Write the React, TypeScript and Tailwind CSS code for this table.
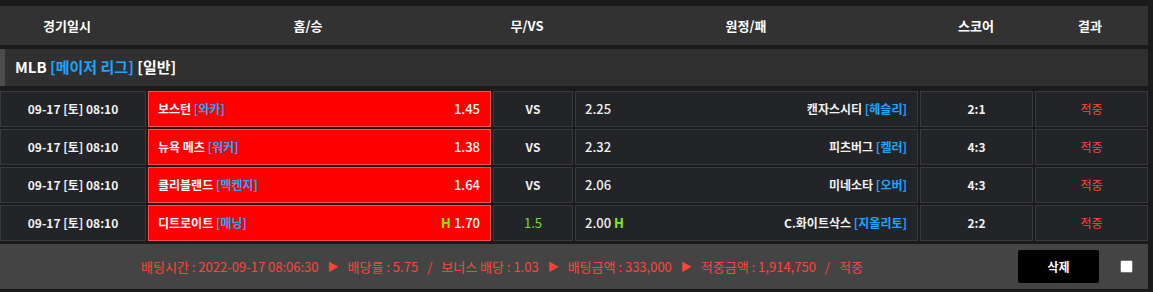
const font = { fontFamily: '"Noto Sans CJK KR", "Noto Sans", sans-serif' };

type Game = {
  home: string;
  homeP: string;
  homeOdd: string;
  draw: string;
  awayOdd: string;
  away: string;
  awayP: string;
  score: string;
  handicap?: boolean;
};

const games: Game[] = [
  { home: "보스턴", homeP: "[와카]", homeOdd: "1.45", draw: "VS", awayOdd: "2.25", away: "캔자스시티", awayP: "[헤슬리]", score: "2:1" },
  { home: "뉴욕 메츠", homeP: "[워커]", homeOdd: "1.38", draw: "VS", awayOdd: "2.32", away: "피츠버그", awayP: "[켈러]", score: "4:3" },
  { home: "클리블랜드", homeP: "[맥켄지]", homeOdd: "1.64", draw: "VS", awayOdd: "2.06", away: "미네소타", awayP: "[오버]", score: "4:3" },
  { home: "디트로이트", homeP: "[매닝]", homeOdd: "1.70", draw: "1.5", awayOdd: "2.00", away: "C.화이트삭스", awayP: "[지올리토]", score: "2:2", handicap: true },
];

function Cell({ className, children }: { className: string; children: React.ReactNode }) {
  return (
    <div className={`flex h-[36px] items-center border border-[#38393c] bg-[#232427] ${className}`}>
      {children}
    </div>
  );
}

function Row({ g }: { g: Game }) {
  return (
    <div className="flex gap-[2px]">
      <Cell className="w-[146px] justify-center text-[12px] font-bold text-[#f2f2f2]">09-17 [토] 08:10</Cell>
      <div className="flex h-[36px] w-[343px] items-center justify-between border border-[#ff5050] bg-[#ff0000] pl-[9px] pr-[10px] text-[12px] font-bold text-white">
        <span>
          {g.home} <span className="text-[#1aa6ff]">{g.homeP}</span>
        </span>
        <span className="flex items-center gap-[3px]">
          {g.handicap && <span className="text-[13px] text-[#7cf000]">H</span>}
          <span className="text-[13px] font-medium">{g.homeOdd}</span>
        </span>
      </div>
      <Cell className={`w-[80px] justify-center text-[12px] ${g.handicap ? "text-[13px] text-[#6fe01e]" : "font-bold text-[#f2f2f2]"}`}>
        {g.draw}
      </Cell>
      <Cell className="w-[343px] justify-between pl-[9px] pr-[10px] text-[12px] font-bold text-[#f2f2f2]">
        <span className="flex items-center gap-[3px]">
          <span className="text-[13px] font-medium">{g.awayOdd}</span>
          {g.handicap && <span className="text-[13px] text-[#7cf000]">H</span>}
        </span>
        <span>
          {g.away} <span className="text-[#1aa6ff]">{g.awayP}</span>
        </span>
      </Cell>
      <Cell className="w-[113px] justify-center text-[12px] font-bold text-[#f2f2f2]">{g.score}</Cell>
      <Cell className="w-[113px] justify-center text-[12px] text-[#ff4436]">적중</Cell>
    </div>
  );
}

export default function App() {
  return (
    <div className="h-[292px] w-[1153px] bg-[#1b1b1b] pt-[6px]" style={font}>
      <div className="w-[1148px]">
        <div className="flex h-[39px] items-center bg-[#323232] text-[13px] font-bold text-white">
          <div className="w-[134px] text-center">경기일시</div>
          <div className="w-[348px] text-center">홈/승</div>
          <div className="w-[90px] text-center">무/VS</div>
          <div className="w-[348px] text-center">원정/패</div>
          <div className="w-[112px] text-center">스코어</div>
          <div className="w-[116px] text-center">결과</div>
        </div>

        <div className="mt-[4px] flex h-[37px] items-center border-l-[5px] border-[#4c4c4c] bg-[#303030] pl-[10px] text-[15px] font-bold text-white">
          MLB&nbsp;<span className="text-[#1aa6ff]">[메이저 리그]</span>&nbsp;[일반]
        </div>

        <div className="mt-[5px] flex flex-col gap-[2px]">
          {games.map((g, i) => (
            <Row key={i} g={g} />
          ))}
        </div>

        <div className="mt-[3px] flex h-[45px] items-center bg-[#444444]">
          <div className="flex flex-1 items-center justify-center gap-[9px] pr-[14px] text-[13px] text-[#ff4436]">
            <span>배팅시간 : 2022-09-17 08:06:30</span>
            <span className="text-[11px]">▶</span>
            <span>배당률 : 5.75</span>
            <span>/</span>
            <span>보너스 배당 : 1.03</span>
            <span className="text-[11px]">▶</span>
            <span>배팅금액 : 333,000</span>
            <span className="text-[11px]">▶</span>
            <span>적중금액 : 1,914,750</span>
            <span>/</span>
            <span>적중</span>
          </div>
          <button className="flex h-[33px] w-[81px] items-center justify-center rounded-[2px] bg-black text-[12px] font-bold text-white">
            삭제
          </button>
          <div className="ml-[21px] mr-[15px] h-[13px] w-[13px] rounded-[2px] border border-[#777] bg-white" />
        </div>
      </div>
    </div>
  );
}
